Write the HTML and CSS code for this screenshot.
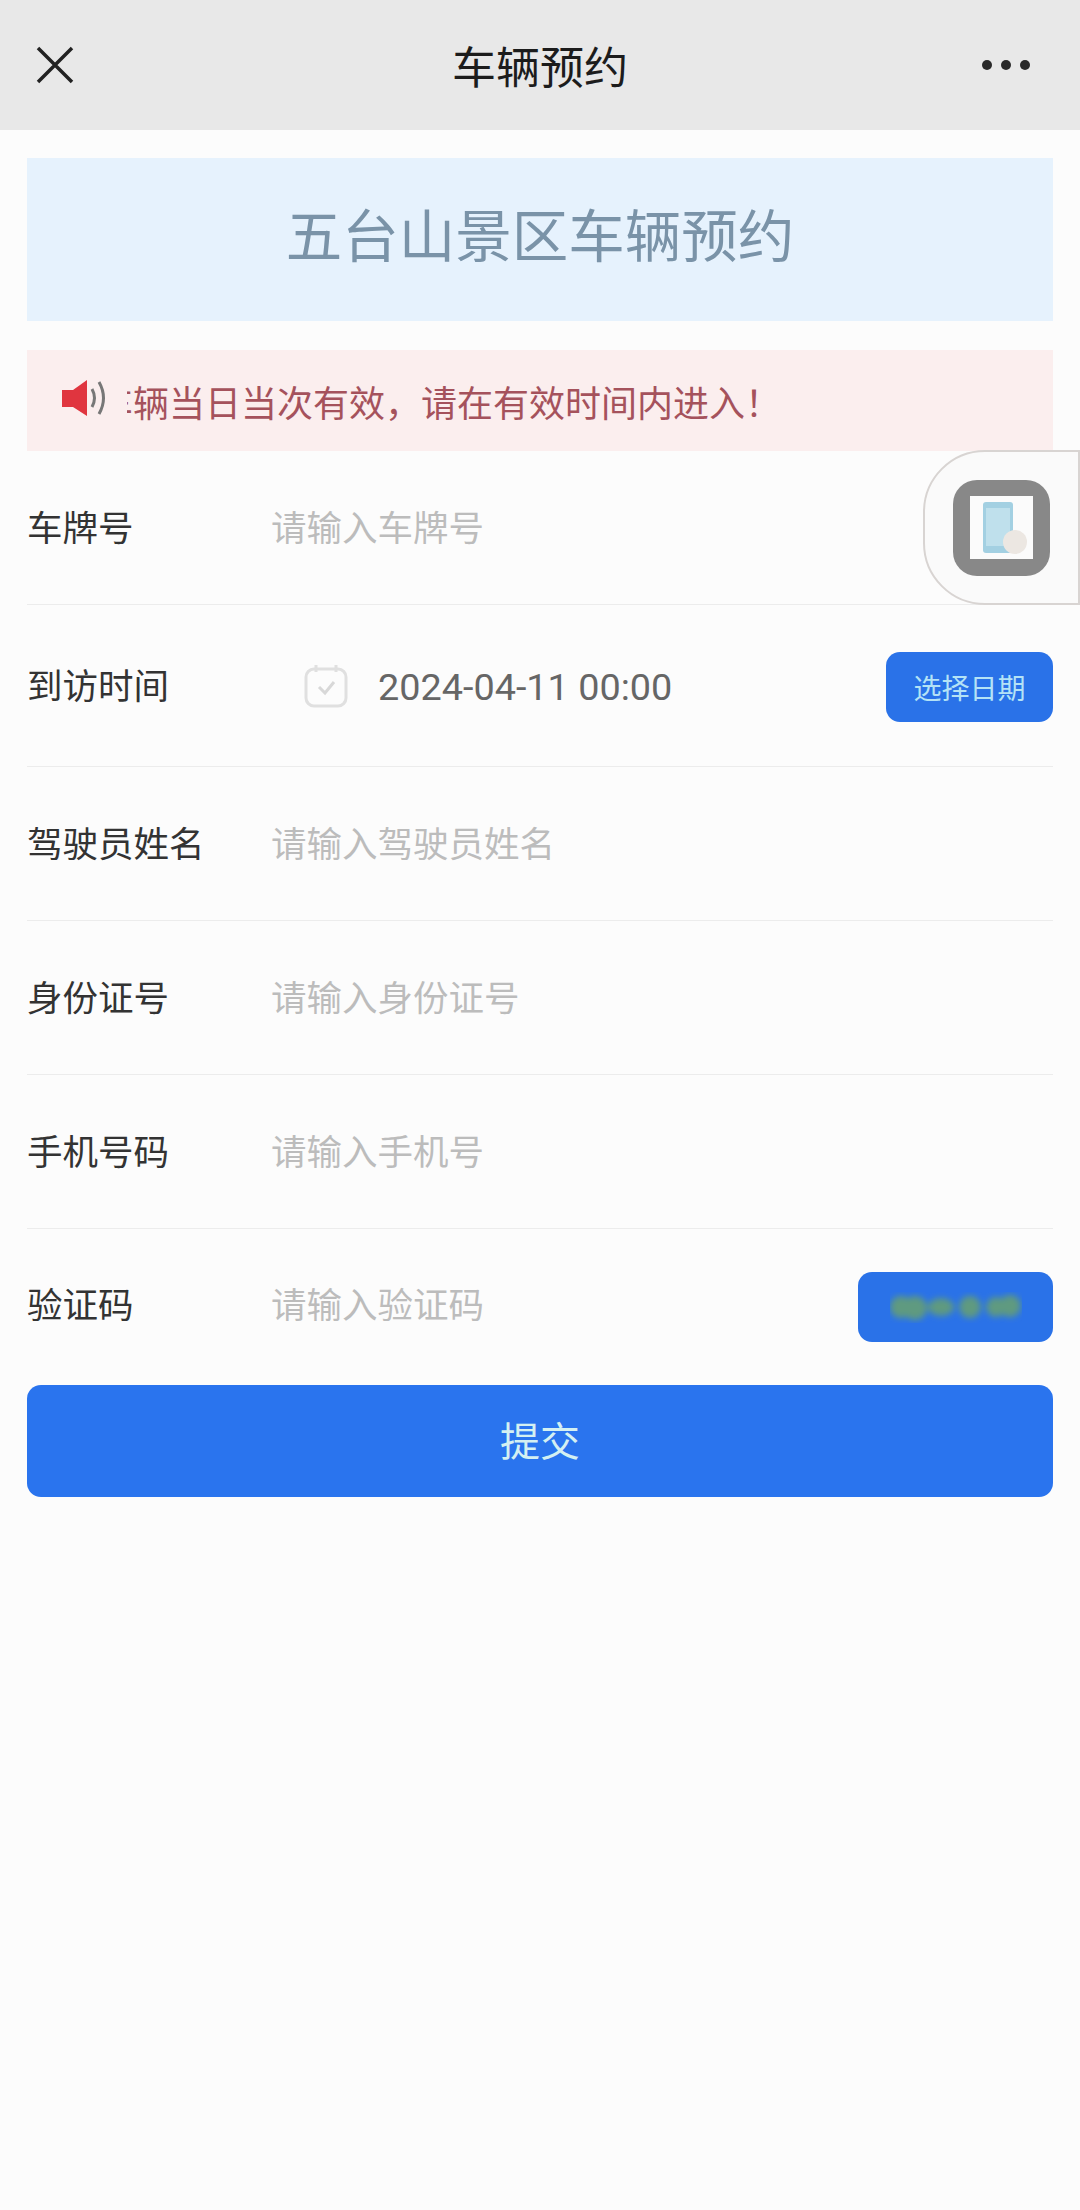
FILE: index.html

```html
<!DOCTYPE html>
<html lang="zh-CN">
<head>
  <meta charset="UTF-8">
  <title>车辆预约</title>
  <link rel="stylesheet" href="styles.css">
</head>
<body>
  <header class="topbar">
    <svg class="close-icon" viewBox="0 0 38 38" aria-hidden="true">
      <path d="M2 2 36 36M36 2 2 36"/>
    </svg>
    <h1 class="topbar-title">车辆预约</h1>
    <div class="more-dots"><i></i><i></i><i></i></div>
  </header>

  <main class="content">
    <div class="banner">五台山景区车辆预约</div>

    <div class="notice">
      <svg class="speaker" viewBox="0 0 48 36" aria-hidden="true">
        <path class="speaker-body" d="M2 10H13L27 0V36L13 27H2Z"/>
        <path class="speaker-wave" d="M32 9Q37 18 32 27M39 2Q48 18 39 34"/>
      </svg>
      <div class="notice-clip"><span class="notice-text">车辆当日当次有效，请在有效时间内进入！</span></div>
    </div>

    <form class="form">
      <div class="row">
        <label class="row-label" for="plate">车牌号</label>
        <input class="row-input" id="plate" type="text" placeholder="请输入车牌号">
      </div>
      <div class="row row-date">
        <span class="row-label">到访时间</span>
        <svg class="calendar" viewBox="0 0 44 44" aria-hidden="true">
          <rect x="2" y="5" width="40" height="37" rx="8"/>
          <path d="M12 1V8M32 1V8"/>
          <path class="calendar-check" d="M15 23 21 29 30 18"/>
        </svg>
        <span class="date-value">2024-04-11 00:00</span>
        <button class="btn-small btn-date" type="button">选择日期</button>
      </div>
      <div class="row">
        <label class="row-label" for="driver">驾驶员姓名</label>
        <input class="row-input" id="driver" type="text" placeholder="请输入驾驶员姓名">
      </div>
      <div class="row">
        <label class="row-label" for="idcard">身份证号</label>
        <input class="row-input" id="idcard" type="text" placeholder="请输入身份证号">
      </div>
      <div class="row">
        <label class="row-label" for="phone">手机号码</label>
        <input class="row-input" id="phone" type="text" placeholder="请输入手机号">
      </div>
      <div class="row row-last">
        <label class="row-label" for="code">验证码</label>
        <input class="row-input" id="code" type="text" placeholder="请输入验证码">
        <button class="btn-small btn-code" type="button" aria-label="获取验证码">
          <svg class="code-blur" viewBox="0 0 132 40" aria-hidden="true">
            <defs><filter id="soft"><feGaussianBlur stdDeviation="3"/></filter></defs>
            <g filter="url(#soft)">
              <circle cx="11" cy="20" r="11"/>
              <circle cx="25" cy="21" r="12"/>
              <ellipse cx="51" cy="20" rx="13" ry="9"/>
              <ellipse cx="80" cy="20" rx="11" ry="11"/>
              <circle cx="106" cy="20" r="10"/>
              <circle cx="120" cy="19" r="11"/>
            </g>
          </svg>
        </button>
      </div>
      <button class="btn-submit" type="button">提交</button>
    </form>
  </main>

  <!-- floating helper on the right edge, sits over the form -->
  <div class="float-tab">
    <div class="float-icon">
      <div class="float-icon-inner">
        <svg viewBox="0 0 63 63" aria-hidden="true">
          <rect class="phone" x="13" y="6" width="30" height="51" rx="3"/>
          <rect class="phone-screen" x="16" y="12" width="24" height="38"/>
          <circle class="finger" cx="45" cy="46" r="12"/>
        </svg>
      </div>
    </div>
  </div>
</body>
</html>
```

FILE: styles.css

```css
* { box-sizing: border-box; }

html, body {
  margin: 0;
  padding: 0;
}
body {
  position: relative;
  min-height: 2210px;
  background: #fcfcfc;
  color: #333;
  font-family: "Noto Sans CJK SC", "Noto Sans", sans-serif;
}

/* top bar */
.topbar {
  display: grid;
  grid-template-columns: 1fr auto 1fr;
  align-items: center;
  height: 130px;
  padding: 0 50px;
  background: #e8e8e8;
}
.close-icon {
  width: 38px;
  height: 38px;
  margin-left: -14px;
  fill: none;
  stroke: #222;
  stroke-width: 3.5;
}
.topbar-title {
  margin: 0;
  color: #1c1c1c;
  font-size: 44px;
  font-weight: 400;
  line-height: 60px;
}
.more-dots {
  display: flex;
  justify-self: end;
  gap: 9px;
}
.more-dots i {
  width: 10px;
  height: 10px;
  border-radius: 50%;
  background: #2a2a2a;
}

.content {
  padding: 28px 27px 0;
}

.banner {
  display: flex;
  align-items: center;
  justify-content: center;
  height: 163px;
  padding-bottom: 16px;
  background: #e6f2fd;
  color: #7a93a8;
  font-size: 56.5px;
}

.notice {
  display: flex;
  align-items: center;
  height: 101px;
  margin-top: 29px;
  padding-left: 33px;
  background: #fbeeee;
}
.speaker {
  flex: none;
  width: 48px;
  height: 36px;
  margin-top: -6px;
}
.speaker-body { fill: #e0353f; }
.speaker-wave {
  fill: none;
  stroke: #777;
  stroke-width: 3;
}
.notice-clip {
  flex: 1;
  margin-left: 19px;
  overflow: hidden;
  white-space: nowrap;
}
.notice-text {
  display: block;
  margin-left: -30px;
  color: #a5525c;
  font-size: 36px;
  line-height: 50px;
}

/* form rows */
.row {
  display: flex;
  align-items: center;
  height: 154px;
  border-bottom: 1px solid #ececec;
}
.row-date {
  height: 162px;
}
.row-last {
  height: 156px;
  border-bottom: none;
}
.row-label {
  flex: none;
  width: 244px;
  margin-bottom: 5px;
  color: #333;
  font-size: 35.5px;
}
.row-input {
  flex: 1;
  min-width: 0;
  margin-bottom: 5px;
  padding: 0;
  border: none;
  outline: none;
  background: transparent;
  color: #333;
  font-family: inherit;
  font-size: 35.5px;
}
.row-input::placeholder {
  color: #bcbcbc;
  opacity: 1;
}
.row-last .row-label,
.row-last .row-input {
  margin-bottom: 9px;
}

.calendar {
  flex: none;
  width: 44px;
  height: 44px;
  margin-left: 33px;
  fill: none;
  stroke: #e0e0e0;
  stroke-width: 3;
}
.calendar-check { stroke: #d8d8d8; }
.date-value {
  flex: 1;
  margin-top: 2px;
  margin-left: 30px;
  color: #666;
  font-family: Roboto, sans-serif;
  font-size: 37.8px;
}

.btn-small {
  flex: none;
  height: 70px;
  padding: 0;
  border: none;
  border-radius: 14px;
  background: #2a72e8;
  color: #b4e2f6;
  font-family: inherit;
  font-size: 28px;
}
.btn-date {
  width: 167px;
  margin-top: 2px;
}
.btn-code {
  width: 195px;
  display: flex;
  align-items: center;
  justify-content: center;
}
.code-blur {
  width: 132px;
  height: 40px;
  fill: #5f9a80;
}

.btn-submit {
  display: block;
  width: 100%;
  height: 112px;
  padding: 0 0 5px;
  border: none;
  border-radius: 14px;
  background: #2a74ee;
  color: #d4f0f2;
  font-family: inherit;
  font-size: 40px;
}

/* floating tab */
.float-tab {
  position: absolute;
  top: 450px;
  left: 923px;
  display: flex;
  align-items: center;
  width: 157px;
  height: 155px;
  padding-left: 28px;
  border: 2px solid #d8d4d2;
  border-radius: 62px 0 0 62px;
  background: #fafafa;
}
.float-icon {
  display: flex;
  align-items: center;
  justify-content: center;
  width: 97px;
  height: 96px;
  border-radius: 24px;
  background: #888;
}
.float-icon-inner {
  width: 63px;
  height: 63px;
  background: #fbfbfb;
}
.float-icon-inner svg {
  display: block;
  width: 63px;
  height: 63px;
}
.phone { fill: #a3d0e2; }
.phone-screen { fill: #bfe0ec; }
.finger { fill: #ece7e2; }
```
